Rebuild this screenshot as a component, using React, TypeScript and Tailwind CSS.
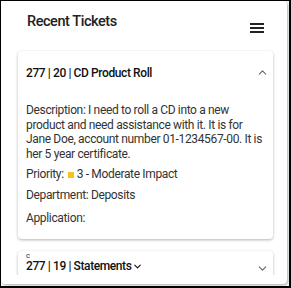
import { ChevronDown, ChevronUp } from "lucide-react";

function Hamburger() {
  return (
    <svg width="14" height="10" viewBox="0 0 14 10" className="text-[#222]">
      <rect x="0" y="0" width="14" height="2" fill="currentColor" />
      <rect x="0" y="4" width="14" height="2" fill="currentColor" />
      <rect x="0" y="8" width="14" height="2" fill="currentColor" />
    </svg>
  );
}

export default function App() {
  return (
    <div
      className="w-[291px] h-[288px] bg-white border-l border-t border-r-2 border-b-2 border-black pr-[2px] pb-[2px] overflow-hidden"
      style={{ fontFamily: "Roboto, 'Liberation Sans', sans-serif" }}
    >
      <div className="h-full rounded-[4px] bg-white shadow-[1px_1px_3px_rgba(0,0,0,0.35)] flex flex-col">
        <div className="flex items-start justify-between pl-[26px] pr-[23px] pt-[10px] h-[49px] shrink-0">
          <h1 className="text-[14.5px] font-medium tracking-[-0.45px] text-[#222]">Recent Tickets</h1>
          <div className="pt-[12px]">
            <Hamburger />
          </div>
        </div>

        <div className="flex-1 overflow-hidden pl-[17px] pr-[14px] pt-[1px] mb-[9px]">
          <div className="rounded-[4px] bg-white shadow-[0_1px_3px_rgba(0,0,0,0.3)] text-[12px] tracking-[-0.35px] text-[#333]">
            <div className="flex items-center justify-between pl-[8px] pr-[4px] h-[43px]">
              <span className="font-medium tracking-[-0.4px] text-[#111]">277 | 20 | CD Product Roll</span>
              <ChevronUp className="w-[13px] h-[13px] text-[#666]" strokeWidth={2} />
            </div>
            <div className="pl-[8px] pr-[8px] pt-[9px] pb-[13px] flex flex-col gap-[6px]">
              <p className="leading-[14.5px]">
                Description: I need to roll a CD into a new product and need assistance with it. It is for Jane Doe,
                account number 01-1234567-00. It is her 5 year certificate.
              </p>
              <p className="flex items-center leading-[15px]">
                Priority:
                <span className="inline-block w-[6px] h-[6px] bg-[#f8c21c] ml-[4px] mr-[3px]" />
                3 - Moderate Impact
              </p>
              <p className="leading-[15px]">Department: Deposits</p>
              <p className="leading-[15px] mt-[2px]">Application:</p>
            </div>
          </div>

          <div className="mt-[12px] rounded-[4px] bg-white shadow-[0_1px_3px_rgba(0,0,0,0.3)] pl-[8px] pr-[4px] pt-[1px] pb-[8px]">
            <div className="flex items-end justify-between">
              <div>
                <div className="text-[8px] leading-[7px] text-[#333]">c</div>
                <div className="flex items-center text-[12px] leading-[14px] font-medium tracking-[-0.4px] text-[#111]">
                  277 | 19 | Statements
                  <ChevronDown className="w-[11px] h-[11px] ml-[1px]" strokeWidth={2.5} />
                </div>
              </div>
              <ChevronDown className="w-[13px] h-[13px] text-[#666] mb-[-2px]" strokeWidth={2} />
            </div>
          </div>
        </div>
      </div>
    </div>
  );
}
